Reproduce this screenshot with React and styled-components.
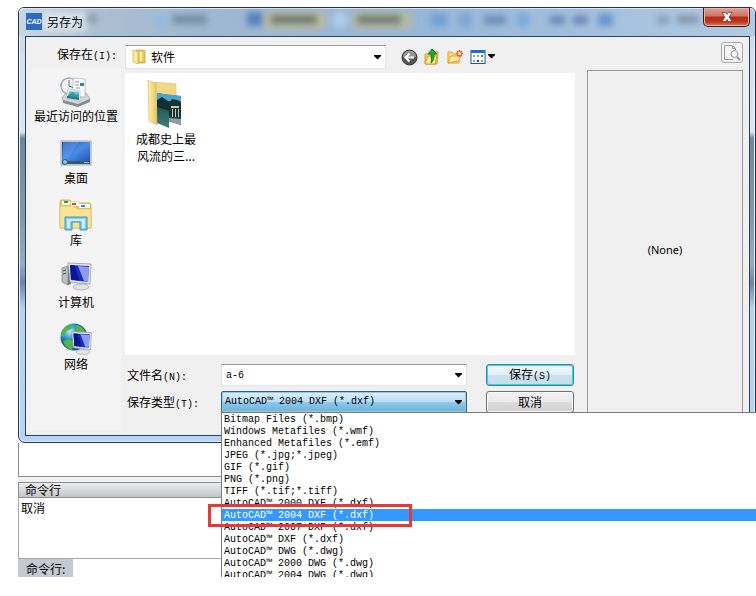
import React from 'react';
import styled, { createGlobalStyle, css } from 'styled-components';

const GlobalStyle = createGlobalStyle`
  * { box-sizing: border-box; }
  body {
    margin: 0;
    background: #fff;
    color: #000;
    font: 12px/16px "Noto Sans CJK SC", sans-serif;
  }
  button, input, select { font: inherit; color: inherit; }
`;

const mono = css`
  font-family: "Liberation Mono", "Noto Sans CJK SC", monospace;
  font-size: 10px;
`;

const Page = styled.main`
  padding: 7px 0 0 18px;
  overflow: hidden;
`;

/* ---------- dialog frame ---------- */

const Dialog = styled.section`
  position: relative;
  z-index: 1;
  padding: 0 5px 6px 6px;
  border: 1px solid #23344a;
  border-radius: 6px 6px 7px 7px;
  background:
    linear-gradient(#c3d5e6 0, #d5e0ea 55px, #dde5ec 124px, #71899f 130px, #8298ab 210px, #97abc4 255px,
      #6d84b0 275px, #b6d2f0 300px, #b4d5f8 100%);
  box-shadow: inset 0 0 0 1px #e4f0fa;
`;

const TitleBar = styled.header`
  position: relative;
  display: flex;
  height: 28px;
  margin: 0 -5px 0 -6px;
  padding: 0 5px 0 6px;
  border-radius: 5px 5px 0 0;
  overflow: hidden;
  background: linear-gradient(90deg, #c9d8e6 0, #aebfd0 70px, #9fb8d2 180px, #97b6d8 400px, #a3bfdd 560px, #b2cae2 100%);
  box-shadow: inset 0 1px 0 #dbe8f3;
`;

const Glass = styled.svg`
  position: absolute;
  inset: 0;
  width: 100%;
  height: 100%;
`;

const TitleLabel = styled.div`
  position: relative;
  display: flex;
  flex: 1;
  gap: 5px;
  padding: 5px 0 0 1px;
`;

const Title = styled.h1`
  margin: 0;
  font: inherit;
  line-height: 17px;
`;

const CloseButton = styled.button`
  position: relative;
  display: grid;
  place-items: center;
  width: 47px;
  height: 19px;
  padding: 0;
  border: 1px solid #43171a;
  border-top: 0;
  border-radius: 0 0 5px 5px;
  background: linear-gradient(#dfa193 0, #cf7463 45%, #b52b17 50%, #b8371f 75%, #dd7a55 100%);
  box-shadow: inset 0 0 0 1px #e9b5a8;
`;

const Body = styled.div`
  display: flex;
  padding: 0 6px 5px 5px;
  border: 1px solid #2b4258;
  background: #f0f0f0;
`;

/* ---------- places column ---------- */

const PlacesColumn = styled.div`
  display: flex;
  flex-direction: column;
  width: 94px;
`;

const LookInLabel = styled.label`
  height: 31px;
  padding: 9px 8px 0 0;
  text-align: right;
  white-space: nowrap;
`;

const Key = styled.span`
  ${mono}
`;

const Places = styled.nav`
  display: flex;
  flex: 1;
  flex-direction: column;
  gap: 13px;
  margin-right: 4px;
  padding-top: 7px;
  background: #f4f4f4;
`;

const Place = styled.button`
  display: flex;
  flex-direction: column;
  align-items: center;
  padding: 0;
  border: 0;
  background: none;
  line-height: 17px;
  white-space: nowrap;
`;

/* ---------- browser column ---------- */

const BrowserColumn = styled.div`
  display: flex;
  flex: 1;
  flex-direction: column;
  min-width: 0;
`;

const Toolbar = styled.div`
  display: flex;
  align-items: center;
  height: 36px;
  padding-top: 4px;
`;

const LookIn = styled.div`
  display: flex;
  align-items: center;
  gap: 5px;
  width: 261px;
  height: 24px;
  padding-left: 6px;
  border: 1px solid #e2e3e6;
  border-top-color: #9b9ca0;
  background: #fff;
`;

const Tools = styled.div`
  display: flex;
  gap: 3px;
  margin-left: 13px;
`;

const Tool = styled.button`
  display: grid;
  place-items: center;
  width: ${(p) => (p.$wide ? 30 : 20)}px;
  height: 20px;
  padding: 0;
  border: 0;
  background: none;
`;

const Files = styled.ul`
  display: flex;
  flex: 1;
  min-height: 282px;
  margin: 0;
  padding: 7px 0 0;
  list-style: none;
  background: #fff;
`;

const File = styled.li`
  display: flex;
  flex-direction: column;
  align-items: center;
  gap: 2px;
  width: 82px;
  line-height: 17px;
  text-align: center;
`;

const FileName = styled.span`
  width: 64px;
`;

const Form = styled.form`
  display: grid;
  grid-template-columns: 94px 1fr 88px;
  grid-auto-rows: 22px;
  row-gap: 5px;
  padding: 9px 1px 17px 2px;
`;

const FormLabel = styled.label`
  line-height: 22px;
  white-space: nowrap;
`;

const Combo = styled.div`
  position: relative;
  display: grid;
  height: 22px;
  margin-right: 19px;
  border: 1px solid ${(p) => (p.$open ? '#2c628b' : '#e2e3e6')};
  border-top-color: ${(p) => (p.$open ? '#2c628b' : '#9b9ca0')};
  border-radius: ${(p) => (p.$open ? 2 : 0)}px;
  background: ${(p) => (p.$open ? 'linear-gradient(#dcf0fb 0, #b9def4 48%, #90c8e9 52%, #68b3db 100%)' : '#fff')};
  box-shadow: ${(p) => (p.$open ? 'inset 0 0 0 1px #9dc5de' : 'none')};
`;

const Picker = styled.div`
  display: grid;
  flex: 1;
`;

const field = css`
  grid-area: 1 / 1;
  width: 100%;
  min-width: 0;
  height: 20px;
  margin: 0;
  border: 0;
  outline: 0;
  background: none;
  appearance: none;
`;

const Select = styled.select`
  ${field}
  padding: 0 22px 0 ${(p) => (p.$mono ? 3 : 0)}px;
  ${(p) => p.$mono && mono}
`;

const NameInput = styled.input`
  ${field}
  ${mono}
  padding: 0 22px 0 4px;
`;

const Arrow = styled.svg`
  grid-area: 1 / 1;
  place-self: center end;
  width: 9px;
  height: 5px;
  margin-right: 3px;
  pointer-events: none;
`;

const FormButton = styled.button`
  height: 22px;
  padding: 0;
  border: 1px solid ${(p) => (p.$primary ? '#2a8dad' : '#707070')};
  border-radius: 3px;
  background: ${(p) =>
    p.$primary
      ? 'linear-gradient(#eef6fa 0, #e2f0f6 48%, #c8e2ec 52%, #c3e0ec 100%)'
      : 'linear-gradient(#f2f2f2 0, #ebebeb 48%, #dddddd 52%, #cfcfcf 100%)'};
  box-shadow: inset 0 0 0 1px ${(p) => (p.$primary ? '#4bc8f0' : '#fafafa')};
`;

/* ---------- open file-type list ---------- */

const Menu = styled.div`
  position: absolute;
  z-index: 2;
  top: 20px;
  left: -1px;
  width: 100vw;
`;

const Options = styled.ul`
  height: 165px;
  margin: 0;
  padding: 0;
  border: 1px solid #7a7a7a;
  border-bottom: 0;
  overflow: hidden;
  list-style: none;
  background: #fff;
`;

const Option = styled.li`
  ${mono}
  height: 12px;
  padding-left: 2px;
  line-height: 13px;
  white-space: pre;
  color: ${(p) => (p.$selected ? '#fff' : '#000')};
  background: ${(p) => (p.$selected ? '#3399ff' : 'transparent')};
`;

const Marker = styled.div`
  position: absolute;
  top: 92px;
  left: -13px;
  width: 204px;
  height: 23px;
  border: 3px solid #e43a3a;
`;

/* ---------- preview column ---------- */

const PreviewColumn = styled.div`
  display: flex;
  flex-direction: column;
  align-items: flex-end;
  gap: 7px;
  width: 156px;
  margin-left: 12px;
  padding-top: 5px;
`;

const PreviewToggle = styled.button`
  display: grid;
  place-items: center;
  width: 22px;
  height: 21px;
  padding: 0;
  border: 1px solid #a9a9a9;
  border-radius: 3px;
  background: #f5f5f5;
`;

const Preview = styled.div`
  display: grid;
  flex: 1;
  place-items: center;
  width: 100%;
  border: 1px solid #9a9a9a;
  font-family: "Noto Sans", sans-serif;
  font-size: 11px;
`;

/* ---------- command window behind the dialog ---------- */

const Canvas = styled.div`
  height: 34px;
  border: solid #8b8d92;
  border-width: 0 0 1px 1px;
`;

const Command = styled.section`
  padding-top: 5px;
  background: #f1f1f1;
`;

const CommandTitle = styled.h2`
  height: 16px;
  margin: 0;
  padding-left: 6px;
  border: 1px solid #8b8d92;
  font: inherit;
  line-height: 14px;
  background: linear-gradient(#eceded, #c3c5c9);
`;

const History = styled.div`
  height: 61px;
  padding: 2px 0 0 2px;
  border: solid #a5a7ab;
  border-width: 0 0 1px 1px;
  background: #fff;
`;

const Prompt = styled.div`
  display: flex;
  height: 18px;
  background: #fff;
`;

const PromptLabel = styled.label`
  width: 55px;
  padding-left: 8px;
  line-height: 19px;
  background: #c5c9d2;
`;

const PromptInput = styled.input`
  flex: 1;
  min-width: 0;
  padding: 0 4px;
  border: 0;
  outline: 0;
`;

/* ---------- drawings ---------- */

const DownArrow = () => (
  <Arrow viewBox="0 0 9 5" aria-hidden="true"><path d="M1 0h7v1L4.500 4.500 1 1z" /></Arrow>
);

const GlassReflections = () => (
  <Glass aria-hidden="true">
    <defs>
      <filter id="soft" x="-30%" y="-80%" width="160%" height="260%"><feGaussianBlur stdDeviation="3" /></filter>
    </defs>
    <g filter="url(#soft)">
      <rect x="24" y="4" width="44" height="19" fill="#e6edf2" opacity=".75" />
      <rect x="66" y="7" width="12" height="8" fill="#62788f" opacity=".55" />
      <circle cx="141" cy="12" r="6" fill="#8fbbe8" />
      <rect x="153" y="7" width="35" height="9" fill="#5f7890" opacity=".65" />
      <rect x="228" y="4" width="16" height="14" fill="#3c6eb0" opacity=".7" />
      <rect x="246" y="3" width="60" height="18" fill="#bdbb93" opacity=".8" />
      <rect x="252" y="7" width="46" height="9" fill="#53625f" opacity=".75" />
      <circle cx="321" cy="12" r="8" fill="#b4d3f0" opacity=".8" />
      <rect x="333" y="3" width="60" height="18" fill="#bdbb93" opacity=".7" />
      <rect x="338" y="7" width="44" height="9" fill="#53625f" opacity=".7" />
      <rect x="412" y="6" width="16" height="12" fill="#5e91cf" opacity=".65" />
      <circle cx="446" cy="12" r="7" fill="#5e91cf" opacity=".5" />
      <rect x="465" y="8" width="22" height="8" fill="#4a719f" opacity=".65" />
      <circle cx="504" cy="12" r="7" fill="#6b9fe0" opacity=".7" />
      <rect x="531" y="8" width="15" height="8" fill="#40659c" opacity=".65" />
      <rect x="554" y="8" width="15" height="8" fill="#40659c" opacity=".65" />
      <rect x="579" y="6" width="15" height="12" fill="#4a7cc4" opacity=".65" />
      <rect x="638" y="8" width="12" height="8" fill="#6c87a6" opacity=".65" />
      <rect x="658" y="7" width="22" height="9" fill="#75869a" opacity=".7" />
    </g>
  </Glass>
);

const CadLogo = () => (
  <svg width="16" height="17" viewBox="0 0 16 17" aria-hidden="true">
    <rect width="16" height="17" fill="#2b6bc4" />
    <text x="8" y="11" textAnchor="middle" fontFamily="Liberation Sans, sans-serif" fontSize="7" fontStyle="italic" fontWeight="700" fill="#fff">CAD</text>
  </svg>
);

const CloseMark = () => (
  <svg width="12" height="10" viewBox="0 0 12 10" aria-hidden="true">
    <path d="M1 .5h3.500L6 2.500 7.500.5H11L8 5l3 4.500H7.500L6 7.500 4.500 9.500H1L4 5z" fill="#fff" stroke="#6b3b39" strokeWidth=".8" />
  </svg>
);

const SmallFolder = () => (
  <svg width="14" height="16" viewBox="0 0 14 16" aria-hidden="true">
    <path d="M4 1h8l1 1v12H4z" fill="#e9c857" stroke="#c19b36" strokeWidth=".7" />
    <path d="M1 1l5 2v12l-5-2z" fill="#fbeaa0" stroke="#cfae4b" strokeWidth=".7" />
    <path d="M9 3v9" stroke="#fff3ba" strokeWidth="2" />
  </svg>
);

const PictureFolder = () => (
  <svg width="38" height="48" viewBox="0 0 38 48" aria-hidden="true">
    <defs>
      <linearGradient id="flap" x2="1"><stop stopColor="#fff0ac" /><stop offset="1" stopColor="#e5c563" /></linearGradient>
      <linearGradient id="water" x2="0" y2="1"><stop stopColor="#153a38" /><stop offset="1" stopColor="#3f8078" /></linearGradient>
    </defs>
    <path d="M6 2l23 2v35H8z" fill="#f0d985" stroke="#d6b75c" strokeWidth=".6" />
    <path d="M21 15l13 1v29l-13-4z" fill="#1e3d49" />
    <path d="M10 13l12 2v33l-12-5z" fill="url(#water)" />
    <path d="M10 13l24 3v6L10 20z" fill="#4ba5d4" />
    <path d="M10 20l5-3 7 5v9l-12-4z" fill="#122f2d" />
    <path d="M22 24l3-5 5 1 4 2v15l-12-1z" fill="#16332b" />
    <path d="M24 26h8v2h-8zm1 3h1v8h-1zm3 0h1v8h-1zm3 0h1v8h-1z" fill="#c8c3b8" />
    <path d="M22 38l12 1v6l-12-4z" fill="#8f9ca9" />
    <path d="M1 0l8 4 1 41L2 41z" fill="url(#flap)" stroke="#d4b65a" strokeWidth=".6" />
  </svg>
);

const RecentIcon = () => (
  <svg width="32" height="32" viewBox="0 0 32 32" aria-hidden="true">
    <path d="M2 23l4-5h20l4 6-12 6-15-4z" fill="#d5d8da" stroke="#8c9296" strokeWidth=".7" />
    <path d="M3 25l15 4 12-5v3l-12 5-15-4z" fill="#868c90" />
    <circle cx="9" cy="11" r="8" fill="#eef3f5" stroke="#a1abb1" strokeWidth="1.500" />
    <path d="M9 5v6l5 2" fill="none" stroke="#5f7683" />
    <path d="M13 3l12 1v18l-12-1z" fill="#fbfcfd" stroke="#9ca8b0" strokeWidth=".6" />
    <path d="M15 7h4m-4 3h4m-3 3h4" stroke="#8797a2" />
    <rect x="20" y="8" width="4" height="3" fill="#3c7fb8" />
    <path d="M8 14l12 2v10L6 23z" fill="#fff" stroke="#8daabb" strokeWidth=".6" />
    <path d="M9 16l10 1v4H8z" fill="#5ec1ed" />
    <path d="M8 20l5-3 3 3 3-1v5L7 22z" fill="#3d9b78" />
    <path d="M7 21l12 2v2L7 23z" fill="#286bab" />
  </svg>
);

const DesktopIcon = () => (
  <svg width="32" height="32" viewBox="0 0 32 32" aria-hidden="true">
    <defs>
      <linearGradient id="desk" x2="1" y2="1"><stop stopColor="#2453b4" /><stop offset=".5" stopColor="#4b8ce5" /><stop offset="1" stopColor="#2055ba" /></linearGradient>
    </defs>
    <rect x="1" y="4" width="30" height="24" fill="#dae3e8" stroke="#8795a1" strokeWidth=".8" />
    <rect x="2" y="5" width="28" height="19" fill="url(#desk)" />
    <path d="M3 5h16L8 21H3z" fill="#75adf1" opacity=".35" />
    <rect x="2" y="24" width="28" height="3" fill="#34586f" />
    <circle cx="5" cy="25" r="2.500" fill="#8cc8d7" stroke="#305d70" />
    <path d="M24 25.500h5" stroke="#a5bac6" />
  </svg>
);

const LibraryIcon = () => (
  <svg width="34" height="32" viewBox="0 0 34 32" aria-hidden="true">
    <path d="M1 3l1-2h9l1 2h7l1 1h11l1 2v23H1z" fill="#e5c75f" stroke="#c6a44b" strokeWidth=".7" />
    <path d="M3 2h8v4H3zm9 1h8v4h-8zm8 2h11v4H20z" fill="#fff" />
    <path d="M5 2h4v2H5z" fill="#28a145" /><path d="M13 4h4v2h-4z" fill="#d34836" /><path d="M22 6h4v2h-4z" fill="#318ac2" />
    <path d="M1 7h14l3 3h14v19H1z" fill="#f9e397" stroke="#d8b959" strokeWidth=".6" />
    <path d="M6 18h22v13h-7v-8h-8v8H6z" fill="#83cbed" stroke="#3793be" />
    <path d="M8 20h18v9h-3v-7H11v7H8z" fill="#cfedfa" />
  </svg>
);

const Monitor = () => (
  <g>
    <path d="M8 2l23 1-1 20-20-2z" fill="#e7ebee" stroke="#9299a1" strokeWidth=".8" />
    <path d="M10 4l19 1-1 16-17-2z" fill="#1a2cc2" />
    <path d="M18 5l11 1-1 15-4-1z" fill="#8f9df1" />
    <path d="M10 4l5 .5 4 15-8-1z" fill="#0b168f" />
    <path d="M19 22h4v4h-4z" fill="#b7bdc3" />
    <ellipse cx="21" cy="26" rx="8" ry="3" fill="#e1e4e6" stroke="#9fa5a9" strokeWidth=".7" />
  </g>
);

const ComputerIcon = () => (
  <svg width="32" height="32" viewBox="0 0 32 32" aria-hidden="true">
    <path d="M2 7l6-2v19l-6-3z" fill="#babfc0" stroke="#777e81" strokeWidth=".7" />
    <path d="M8 5l3 1v17l-3 1z" fill="#737a7d" />
    <path d="M3 10l3-1m-3 4l3-1" stroke="#4d5558" />
    <Monitor />
  </svg>
);

const NetworkIcon = () => (
  <svg width="32" height="32" viewBox="0 0 32 32" aria-hidden="true">
    <defs>
      <radialGradient id="globe" cx=".35" cy=".3"><stop stopColor="#b7eaff" /><stop offset=".6" stopColor="#298bc7" /><stop offset="1" stopColor="#134f92" /></radialGradient>
    </defs>
    <circle cx="14" cy="14" r="13.500" fill="url(#globe)" />
    <path d="M2 8c3-5 7-7 11-7l-2 5-5 2-2 6-3-1zm15-6c5 1 8 5 9 8l-7 1-5-4zM3 18l6-2 6 3-3 8c-5-1-8-5-9-9z" fill="#4fb54b" />
    <g transform="translate(5 7) scale(.85)"><Monitor /></g>
  </svg>
);

const BackIcon = () => (
  <svg width="17" height="17" viewBox="0 0 17 17" aria-hidden="true">
    <circle cx="8.500" cy="8.500" r="7.500" fill="#555" stroke="#353535" />
    <path d="M2 8a6.500 6.500 0 0 1 13 0z" fill="#969696" />
    <path d="M13 8.500H5m3.500-4l-4 4 4 4" fill="none" stroke="#fff" strokeWidth="2" />
  </svg>
);

const UpIcon = () => (
  <svg width="18" height="18" viewBox="0 0 18 18" aria-hidden="true">
    <path d="M2 6h5l1-2h7l-1 12H2z" fill="#f6dc69" stroke="#cf9b27" />
    <path d="M2 16L5 8h9l-2 8z" fill="#fff0a0" stroke="#d19c2b" />
    <path d="M9 1l5 5h-3c0 5-.5 7-3 9 1-4 0-6 0-9H5z" fill="#2cab27" stroke="#147b17" />
  </svg>
);

const NewFolderIcon = () => (
  <svg width="18" height="18" viewBox="0 0 18 18" aria-hidden="true">
    <path d="M2 4h4l2 2h5v9H2z" fill="#f9dc75" stroke="#e79d33" />
    <path d="M2 15l3-7h10l-3 5z" fill="#fff1aa" stroke="#e79d33" />
    <path d="M13.500 2v7M10 5.500h7M11 3l5 5m0-5l-5 5" stroke="#e75a2e" strokeWidth="1.300" />
    <circle cx="13.500" cy="5.500" r="1.500" fill="#fff3a2" />
  </svg>
);

const ViewIcon = () => (
  <svg width="26" height="16" viewBox="0 0 26 16" aria-hidden="true">
    <rect x="1" y="1.500" width="14" height="13" fill="#fff" stroke="#1558b4" />
    <path d="M1 1h14v3H1z" fill="#2469d2" />
    <path d="M3 6h2v2H3zm8 5h2v2h-2z" fill="#7aa6bd" />
    <path d="M7 6h2v2H7zm-4 5h2v2H3z" fill="#a49ad0" />
    <path d="M11 6h2v2h-2z" fill="#3d9b4c" /><path d="M7 11h2v2H7z" fill="#203e99" />
    <path d="M18 5h7v1l-3.500 3.500L18 6z" />
  </svg>
);

const PreviewIcon = () => (
  <svg width="18" height="17" viewBox="0 0 18 17" fill="none" stroke="#999" aria-hidden="true">
    <path d="M10 15.500H1.500v-14h8l3 3V6M9.500 1.500v3h3" />
    <circle cx="11.500" cy="10" r="3.500" fill="#f5f5f5" /><path d="M14 13l3 3" strokeWidth="2" />
  </svg>
);

/* ---------- data ---------- */

const places = [
  ['最近访问的位置', RecentIcon],
  ['桌面', DesktopIcon],
  ['库', LibraryIcon],
  ['计算机', ComputerIcon],
  ['网络', NetworkIcon],
];

const fileTypes = [
  'Bitmap Files (*.bmp)',
  'Windows Metafiles (*.wmf)',
  'Enhanced Metafiles (*.emf)',
  'JPEG (*.jpg;*.jpeg)',
  'GIF (*.gif)',
  'PNG (*.png)',
  'TIFF (*.tif;*.tiff)',
  'AutoCAD™ 2000 DXF (*.dxf)',
  'AutoCAD™ 2004 DXF (*.dxf)',
  'AutoCAD™ 2007 DXF (*.dxf)',
  'AutoCAD™ DXF (*.dxf)',
  'AutoCAD™ DWG (*.dwg)',
  'AutoCAD™ 2000 DWG (*.dwg)',
  'AutoCAD™ 2004 DWG (*.dwg)',
];
const selectedType = fileTypes[8];

export default function App() {
  return (
    <Page>
      <GlobalStyle />
      <Dialog role="dialog" aria-labelledby="dialog-title">
        <TitleBar>
          <GlassReflections />
          <TitleLabel>
            <CadLogo />
            <Title id="dialog-title">另存为</Title>
          </TitleLabel>
          <CloseButton type="button" aria-label="关闭"><CloseMark /></CloseButton>
        </TitleBar>
        <Body>
          <PlacesColumn>
            <LookInLabel htmlFor="look-in">保存在<Key>(I):</Key></LookInLabel>
            <Places>
              {places.map(([name, Icon]) => (
                <Place type="button" key={name}><Icon />{name}</Place>
              ))}
            </Places>
          </PlacesColumn>
          <BrowserColumn>
            <Toolbar>
              <LookIn>
                <SmallFolder />
                <Picker>
                  <Select id="look-in" defaultValue="软件"><option>软件</option></Select>
                  <DownArrow />
                </Picker>
              </LookIn>
              <Tools>
                <Tool type="button" aria-label="后退"><BackIcon /></Tool>
                <Tool type="button" aria-label="向上一级"><UpIcon /></Tool>
                <Tool type="button" aria-label="新建文件夹"><NewFolderIcon /></Tool>
                <Tool type="button" aria-label="查看" $wide><ViewIcon /></Tool>
              </Tools>
            </Toolbar>
            <Files>
              <File>
                <PictureFolder />
                <FileName>成都史上最风流的三...</FileName>
              </File>
            </Files>
            <Form onSubmit={(e) => e.preventDefault()}>
              <FormLabel htmlFor="file-name">文件名<Key>(N):</Key></FormLabel>
              <Combo>
                <NameInput id="file-name" type="text" defaultValue="a-6" />
                <DownArrow />
              </Combo>
              <FormButton type="submit" $primary>保存<Key>(S)</Key></FormButton>
              <FormLabel htmlFor="file-type">保存类型<Key>(T):</Key></FormLabel>
              <Combo $open>
                <Select id="file-type" defaultValue={selectedType} $mono>
                  {fileTypes.map((type) => <option key={type}>{type}</option>)}
                </Select>
                <DownArrow />
                <Menu>
                  <Options role="listbox" aria-label="保存类型">
                    {fileTypes.map((type) => (
                      <Option key={type} role="option" aria-selected={type === selectedType} $selected={type === selectedType}>
                        {type}
                      </Option>
                    ))}
                  </Options>
                  <Marker />
                </Menu>
              </Combo>
              <FormButton type="button">取消</FormButton>
            </Form>
          </BrowserColumn>
          <PreviewColumn>
            <PreviewToggle type="button" aria-label="预览"><PreviewIcon /></PreviewToggle>
            <Preview>(None)</Preview>
          </PreviewColumn>
        </Body>
      </Dialog>
      <Canvas />
      <Command>
        <CommandTitle>命令行</CommandTitle>
        <History>取消</History>
        <Prompt>
          <PromptLabel htmlFor="command">命令行:</PromptLabel>
          <PromptInput id="command" type="text" />
        </Prompt>
      </Command>
    </Page>
  );
}
